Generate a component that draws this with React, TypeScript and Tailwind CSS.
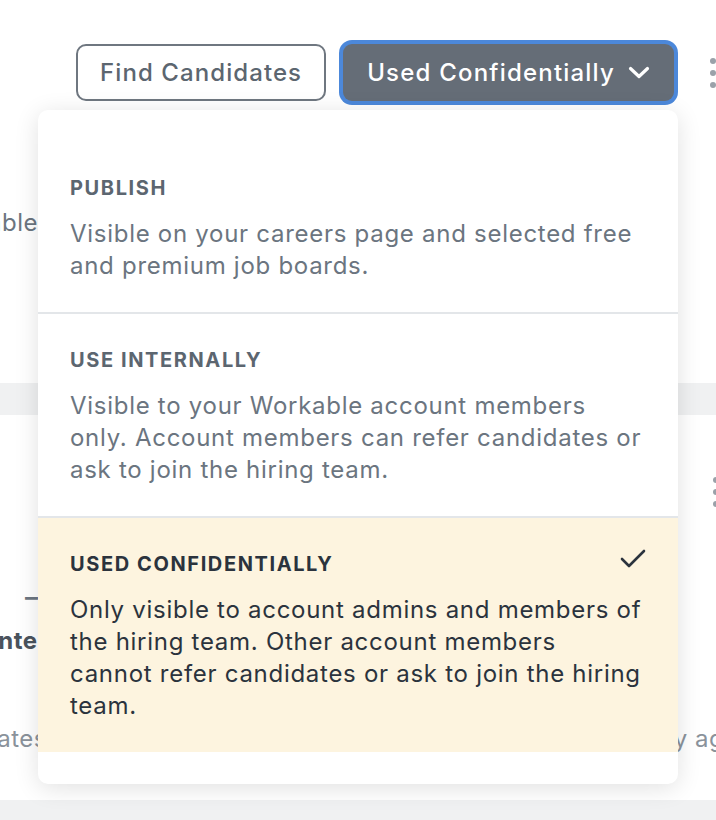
const font = { fontFamily: "Inter, 'Noto Sans', sans-serif" };

const options = [
  {
    title: "Publish",
    text: "Visible on your careers page and selected free and premium job boards.",
    selected: false,
  },
  {
    title: "Use internally",
    text: "Visible to your Workable account members only. Account members can refer candidates or ask to join the hiring team.",
    selected: false,
  },
  {
    title: "Used confidentially",
    text: "Only visible to account admins and members of the hiring team. Other account members cannot refer candidates or ask to join the hiring team.",
    selected: true,
  },
];

function Kebab() {
  return (
    <div className="flex flex-col gap-[6px]">
      <span className="w-[6px] h-[6px] rounded-full bg-[#9aa1a9]" />
      <span className="w-[6px] h-[6px] rounded-full bg-[#9aa1a9]" />
      <span className="w-[6px] h-[6px] rounded-full bg-[#9aa1a9]" />
    </div>
  );
}

export default function App() {
  return (
    <div className="relative w-[716px] h-[820px] overflow-hidden bg-[#f0f1f2]" style={font}>
      {/* Page behind the menu */}
      <div className="bg-white h-[383px]">
        <div className="flex items-center pt-11 pl-[76px]">
          <button className="h-[57px] w-[252px] rounded-[10px] border-2 border-[#6f7780] bg-white text-[24px] font-medium tracking-[0.045em] text-[#5c6670]">
            Find Candidates
          </button>
          <button className="ml-[17px] h-[57px] w-[333px] rounded-[9px] bg-[#656d77] ring-4 ring-[#4c88da] flex items-center pl-6 pr-[24px] text-[24px] font-medium tracking-[0.05em] text-white">
            <span>Used Confidentially</span>
            <svg width="22" height="13" viewBox="0 0 22 13" fill="none" className="ml-auto">
              <path d="M2.5 2.5l8.5 8 8.5-8" stroke="white" strokeWidth="3.2" strokeLinecap="round" strokeLinejoin="round" />
            </svg>
          </button>
          <div className="ml-[36px]">
            <Kebab />
          </div>
        </div>
        <div className="flex justify-end w-[38px] mt-[104px]">
          <span className="whitespace-nowrap text-[24px] tracking-[0.02em] text-[#6b7580]">Not applicable</span>
        </div>
      </div>
      <div className="bg-white h-[385px] mt-[32px]">
        <div className="flex pt-[62px] pl-[713px]">
          <Kebab />
        </div>
        <div className="flex justify-end w-[38px] mt-[77px]">
          <span className="whitespace-nowrap text-[26px] leading-none font-semibold text-[#6b7580]">–</span>
        </div>
        <div className="flex mt-[13px]">
          <span className="ml-[-9px] whitespace-nowrap text-[24px] font-bold tracking-[0.02em] text-[#4a535d]">Internal</span>
        </div>
        <div className="flex items-center mt-[62px]">
          <span className="ml-[-86px] whitespace-nowrap text-[24px] tracking-[0.02em] text-[#8a929b]">Candidates</span>
          <span className="ml-auto mr-[-65px] whitespace-nowrap text-[24px] tracking-[0.02em] text-[#8a929b]">by agency</span>
        </div>
      </div>

      {/* Dropdown menu */}
      <div className="absolute left-[38px] top-[110px] w-[640px] rounded-[10px] bg-white py-8 shadow-[0_4px_24px_rgba(0,0,0,0.12)]">
        {options.map((o, i) => (
          <div
            key={o.title}
            className={`px-8 pt-8 pb-[30px] ${i > 0 ? "border-t-2 border-[#e3e6e9]" : ""} ${o.selected ? "bg-[#fdf4df]" : ""}`}
          >
            <div className="flex items-center justify-between">
              <div
                className={`uppercase font-bold text-[20px] leading-7 tracking-[0.08em] ${o.selected ? "text-[#2b333d]" : "text-[#5c6670]"}`}
              >
                {o.title}
              </div>
              {o.selected && (
                <svg width="26" height="20" viewBox="0 0 26 20" fill="none" className="-mt-3">
                  <path d="M2 11l7 7L24 3" stroke="#2b333d" strokeWidth="2.6" strokeLinecap="round" strokeLinejoin="round" />
                </svg>
              )}
            </div>
            <p
              className={`mt-[16px] pr-[3px] text-[24px] leading-8 tracking-[0.03em] ${o.selected ? "text-[#2b333d]" : "text-[#6b7580]"}`}
            >
              {o.text}
            </p>
          </div>
        ))}
      </div>
    </div>
  );
}
